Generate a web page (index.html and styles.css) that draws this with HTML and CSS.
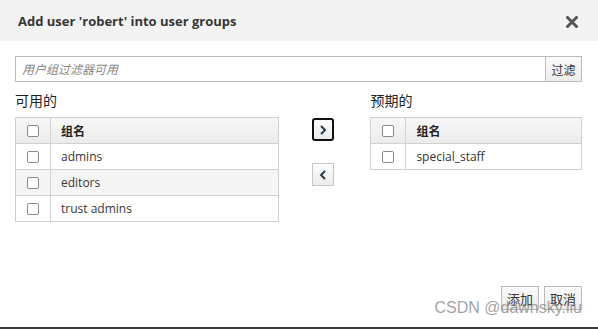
FILE: index.html
```html
<!DOCTYPE html>
<html>
<head>
<meta charset="utf-8">
<link rel="stylesheet" href="styles.css">
</head>
<body>
<div class="modal">
  <div class="header">
    <h1 class="title">Add user 'robert' into user groups</h1>
    <span class="close"><svg width="12" height="12" viewBox="0 0 12 12"><path d="M1.5 1.5 L10.5 10.5 M10.5 1.5 L1.5 10.5" stroke="#555" stroke-width="3" stroke-linecap="square"/></svg></span>
  </div>
  <div class="body">
    <div class="filter">
      <input class="filter-input" type="text" placeholder="用户组过滤器可用">
      <button class="btn filter-btn">过滤</button>
    </div>
    <div class="columns">
      <div class="col left">
        <div class="label">可用的</div>
        <table class="grid">
          <tr class="head"><th class="cb"><span class="box"></span></th><th>组名</th></tr>
          <tr><td class="cb"><span class="box"></span></td><td>admins</td></tr>
          <tr class="alt"><td class="cb"><span class="box"></span></td><td>editors</td></tr>
          <tr><td class="cb"><span class="box"></span></td><td>trust admins</td></tr>
        </table>
      </div>
      <div class="mid">
        <button class="arrow focus"><svg width="8" height="10" viewBox="0 0 8 10"><path d="M2 1 L6 5 L2 9" fill="none" stroke="#2b3a4a" stroke-width="2"/></svg></button>
        <button class="arrow"><svg width="8" height="10" viewBox="0 0 8 10"><path d="M6 1 L2 5 L6 9" fill="none" stroke="#2b3a4a" stroke-width="2"/></svg></button>
      </div>
      <div class="col right">
        <div class="label">预期的</div>
        <table class="grid">
          <tr class="head"><th class="cb"><span class="box"></span></th><th>组名</th></tr>
          <tr><td class="cb"><span class="box"></span></td><td>special_staff</td></tr>
        </table>
      </div>
    </div>
    <div class="footer">
      <button class="btn">添加</button>
      <button class="btn">取消</button>
    </div>
  </div>
  <div class="watermark">CSDN @dawnsky.liu</div>
</div>
</body>
</html>
```
FILE: styles.css
```css
html, body { margin: 0; padding: 0; background: #fff; }
body { width: 598px; height: 329px; overflow: hidden; font-family: "Open Sans", "Noto Sans CJK SC", sans-serif; color: #363636; }
.modal { position: relative; height: 327px; border-bottom: 2px solid #3a3a3a; display: flex; flex-direction: column; }
.header { height: 41px; background: #f3f3f3; display: flex; align-items: center; justify-content: space-between; padding: 0 20px 0 18px; }
.title { margin: 0; font-size: 13px; font-weight: 700; color: #363636; }
.close { display: flex; margin-top: 2px; }
.body { flex: 1; padding: 15px 16px 0 15px; display: flex; flex-direction: column; }
.filter { display: flex; height: 26px; }
.filter-input { flex: 1; box-sizing: border-box; height: 26px; border: 1px solid #bbb; border-right: none; padding: 0 6px; font-family: "Open Sans", "Noto Sans CJK SC", sans-serif; font-size: 12px; font-style: italic; outline: none; }
.filter-input::placeholder { color: #888; font-style: italic; }
.btn { box-sizing: border-box; height: 26px; border: 1px solid #bbb; background: linear-gradient(#fafafa, #ececec); font-family: "Noto Sans CJK SC", sans-serif; font-size: 12px; color: #363636; padding: 0 6px; cursor: pointer; }
.filter-btn { width: 37px; padding: 0; }
.columns { display: flex; margin-top: 9px; }
.col { display: flex; flex-direction: column; }
.left { width: 264px; }
.right { width: 212px; }
.label { font-family: "Noto Sans CJK SC", sans-serif; font-size: 14px; color: #222; height: 18px; line-height: 18px; margin-bottom: 8px; }
.grid { border-collapse: collapse; width: 100%; font-size: 12px; }
.grid th, .grid td { border: 1px solid #d1d1d1; height: 25px; padding: 0 0 0 10px; text-align: left; }
.grid th { font-family: "Noto Sans CJK SC", sans-serif; font-weight: 700; font-size: 12px; color: #222; }
.grid .head { background: linear-gradient(#f7f7f7, #ebebeb); }
.grid .alt { background: #f5f5f5; }
.grid .cb { width: 23px; padding: 0 0 0 11px; }
.box { display: block; width: 10px; height: 10px; border: 1px solid #8a8a8a; border-radius: 2px; background: #fff; }
.mid { width: 92px; display: flex; flex-direction: column; align-items: flex-start; padding: 27px 0 0 33px; box-sizing: border-box; gap: 22px; }
.arrow { box-sizing: border-box; width: 22px; height: 23px; border: 1px solid #c6c6c6; background: linear-gradient(#fdfdfd, #ececec); display: flex; align-items: center; justify-content: center; padding: 0; }
.arrow.focus { border: 2px solid #111; border-radius: 3px; }
.footer { margin-top: auto; margin-bottom: 17px; display: flex; justify-content: flex-end; gap: 5px; }
.footer .btn { width: 38px; height: 24px; padding: 0; font-size: 13px; }
.watermark { position: absolute; right: 16px; bottom: 10px; font-family: "Liberation Sans", sans-serif; font-size: 16px; color: rgba(120,120,120,0.7); }
```
